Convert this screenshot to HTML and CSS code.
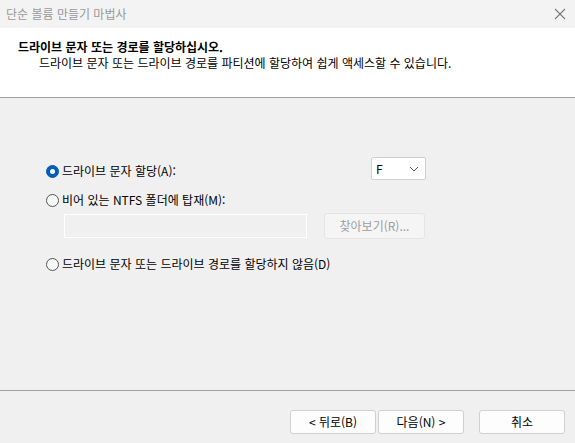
FILE: index.html
```html
<!DOCTYPE html>
<html lang="ko">
<head>
<meta charset="utf-8">
<link rel="stylesheet" href="styles.css">
</head>
<body>
<div class="window">
  <div class="titlebar">
    <span class="title">단순 볼륨 만들기 마법사</span>
    <svg class="close" width="12" height="12" viewBox="0 0 12 12"><path d="M1 1 L11 11 M11 1 L1 11" stroke="#7a7a7a" stroke-width="1.1" fill="none"/></svg>
  </div>
  <div class="header">
    <div class="h-title">드라이브 문자 또는 경로를 할당하십시오.</div>
    <div class="h-sub">드라이브 문자 또는 드라이브 경로를 파티션에 할당하여 쉽게 액세스할 수 있습니다.</div>
  </div>
  <div class="content">
    <div class="row row1">
      <label class="opt"><span class="radio checked"></span>드라이브 문자 할당(A):</label>
      <div class="select"><span>F</span>
        <svg width="10" height="6" viewBox="0 0 10 6"><path d="M1 1 L5 5 L9 1" stroke="#555" stroke-width="1" fill="none"/></svg>
      </div>
    </div>
    <div class="row row2">
      <label class="opt"><span class="radio"></span>비어 있는 NTFS 폴더에 탑재(M):</label>
    </div>
    <div class="row row3">
      <div class="input"></div>
      <div class="btn disabled">찾아보기(R)...</div>
    </div>
    <div class="row row4">
      <label class="opt"><span class="radio"></span>드라이브 문자 또는 드라이브 경로를 할당하지 않음(D)</label>
    </div>
  </div>
  <div class="footer">
    <div class="btn fbtn">&lt; 뒤로(B)</div>
    <div class="btn fbtn">다음(N) &gt;</div>
    <div class="btn fbtn cancel">취소</div>
  </div>
</div>
</body>
</html>
```

FILE: styles.css
```css
* { box-sizing: border-box; }
html, body { margin: 0; padding: 0; }
body {
  width: 575px;
  height: 443px;
  overflow: hidden;
  font-family: "Noto Sans CJK KR", "Noto Sans", sans-serif;
  font-size: 12px;
  color: #000;
  background: #f0f0f0;
}
.window { width: 575px; height: 443px; display: flex; flex-direction: column; }
.titlebar {
  height: 28px;
  background: #f3f3f3;
  display: flex;
  align-items: center;
  justify-content: space-between;
  padding: 0 8px 0 6px;
}
.title { color: #999; font-size: 12px; line-height: 16px; }
.close { margin-right: 1px; }
.header {
  height: 70px;
  background: #fff;
  border-bottom: 1px solid #a0a0a0;
  padding: 11px 0 0 18px;
}
.h-title { font-weight: bold; line-height: 16px; }
.h-sub { padding-left: 21px; line-height: 16px; }
.content {
  height: 293px;
  border-bottom: 1px solid #a0a0a0;
  padding: 61px 0 0 46px;
  display: flex;
  flex-direction: column;
}
.row { display: flex; align-items: center; }
.row1 { height: 23px; justify-content: space-between; width: 380px; }
.row2 { height: 16px; margin-top: 10px; }
.row3 { margin-top: 5px; padding-left: 18px; height: 26px; }
.row4 { height: 16px; margin-top: 17px; }
.opt { display: flex; align-items: center; line-height: 16px; }
.radio {
  width: 13px; height: 13px;
  border-radius: 50%;
  border: 1px solid #555;
  background: #f7f7f7;
  margin-right: 3px;
  margin-top: 1px;
  position: relative;
}
.radio.checked { background: #005fb8; border-color: #005fb8; }
.radio.checked::after {
  content: "";
  position: absolute;
  left: 3px; top: 3px;
  width: 5px; height: 5px;
  border-radius: 50%;
  background: #fff;
}
.select {
  width: 55px; height: 23px;
  background: #fff;
  border: 1px solid #d0d0d0;
  border-radius: 2px;
  display: flex;
  align-items: center;
  justify-content: space-between;
  padding: 0 6px 0 4px;
  margin-top: -4px;
}
.input {
  width: 243px; height: 24px;
  border: 1px solid #fff;
  background: #f0f0f0;
}
.btn {
  border: 1px solid #d0d0d0;
  border-radius: 3px;
  background: #fdfdfd;
  display: flex;
  align-items: center;
  justify-content: center;
  line-height: 16px;
}
.btn.disabled {
  margin-left: 17px;
  width: 101px; height: 26px;
  color: #9d9d9d;
  background: #f5f5f5;
  border-color: #e5e5e5;
}
.footer {
  flex: 1;
  display: flex;
  align-items: flex-start;
  padding: 19px 0 0 290px;
}
.fbtn { width: 86px; height: 24px; margin-right: 2px; }
.cancel { margin-left: 13px; }
```
